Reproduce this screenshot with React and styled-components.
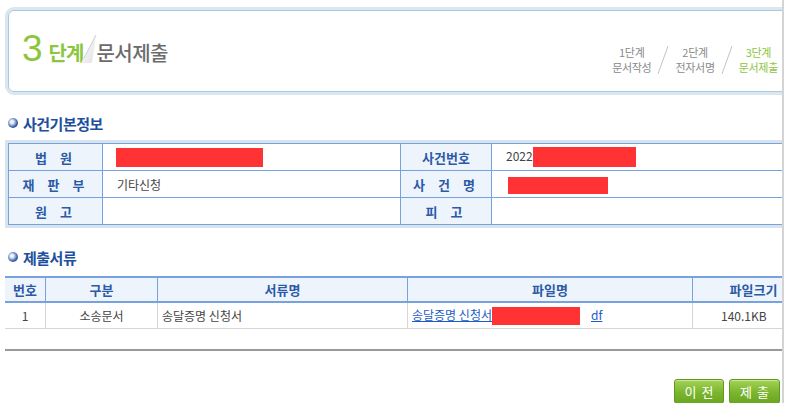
import React from 'react';
import styled, { createGlobalStyle } from 'styled-components';

const GlobalStyle = createGlobalStyle`
	html, body {
		margin: 0;
		padding: 0;
		background: #fff;
	}
	body {
		font-family: 'Noto Sans CJK KR', 'Noto Sans', sans-serif;
		font-size: 12px;
		color: #444;
	}
`;

const Frame = styled.div`
	width: 782px;
	height: 403px;
	overflow: hidden;
	border-right: 2px solid #d4d4d4;
	background: #fff;
`;

const Inner = styled.div`
	width: 820px;
`;

const StepBox = styled.div`
	margin: 10px 0 0 8px;
	width: 790px;
	height: 82px;
	border: 1px solid #a9c9e2;
	border-radius: 6px;
	box-shadow: 0 0 0 3px #dbe7f0;
	display: flex;
	align-items: flex-end;
	padding: 0 0 0 13px;
	box-sizing: border-box;
`;

const StepTitle = styled.div`
	display: flex;
	align-items: baseline;
	padding-bottom: 24px;
	font-family: 'Liberation Sans', 'Noto Sans CJK KR', sans-serif;
`;

const BigNum = styled.span`
	font-size: 37px;
	line-height: 36px;
	color: #8cc63f;
	margin-right: 6px;
`;

const StepWord = styled.span`
	font-family: 'Noto Sans CJK KR', sans-serif;
	font-size: 20px;
	font-weight: 700;
	color: #8cc63f;
	letter-spacing: -1px;
`;

const Slash = styled.svg`
	width: 18px;
	height: 34px;
	margin: 0 -1px 0 -4px;
	align-self: flex-end;
`;

const StepName = styled.span`
	font-family: 'Noto Sans CJK KR', sans-serif;
	font-size: 20px;
	font-weight: 500;
	color: #6b6b6b;
	letter-spacing: -0.5px;
`;

const Steps = styled.div`
	margin-left: auto;
	margin-right: 19px;
	padding-bottom: 16px;
	display: flex;
	align-items: center;
	gap: 5px;
`;

const Step = styled.div`
	text-align: center;
	font-size: 11px;
	line-height: 15px;
	letter-spacing: -0.3px;
	color: ${p => (p.active ? '#8cc63f' : '#8a8a8a')};
`;

const StepSep = styled.svg`
	width: 14px;
	height: 30px;
`;

const SectionTitle = styled.h2`
	margin: ${p => p.mt} 0 0 8px;
	display: flex;
	align-items: center;
	gap: 5px;
	font-size: 15px;
	font-weight: 700;
	color: #1d4f9e;
	height: 18px;
	letter-spacing: -0.5px;
`;

const Bullet = styled.span`
	width: 10px;
	height: 10px;
	border-radius: 50%;
	background: radial-gradient(circle at 40% 40%, #eef3fb 0 1.5px, #9fb6de 3px, #5d7dbd 4.5px, #3d5a9c 5px);
`;

const InfoWrap = styled.div`
	margin: 8px 0 0 5px;
	padding: 3px 0 3px 3px;
	background: #d7e4ee;
`;

const InfoTable = styled.table`
	border-collapse: collapse;
	width: 810px;
	background: #fff;
	table-layout: fixed;
`;

const Label = styled.th`
	width: ${p => p.w}px;
	height: 26px;
	padding: 0;
	background: #eef4fb;
	border: 1px solid #77a1df;
	font-size: 13px;
	font-weight: 700;
	color: #2b5aa8;
	letter-spacing: ${p => p.ls || '0'};
	word-spacing: 2px;
`;

const Value = styled.td`
	width: ${p => (p.w ? `${p.w}px` : 'auto')};
	height: 26px;
	padding: 0 0 0 14px;
	border: 1px solid #77a1df;
	font-size: 12px;
	color: #444;
	white-space: nowrap;
`;

const Redact = styled.span`
	display: inline-block;
	vertical-align: middle;
	width: ${p => p.w}px;
	height: ${p => p.h}px;
	background: #ff3333;
	margin-left: ${p => p.ml || 0}px;
`;

const DocTable = styled.table`
	margin: 10px 0 0 5px;
	border-collapse: collapse;
	width: 810px;
	table-layout: fixed;
`;

const Head = styled.th`
	width: ${p => (p.w ? `${p.w}px` : 'auto')};
	height: 23px;
	padding: 0;
	background: #eef4fb;
	border: 1px solid #77a1df;
	border-width: 2px 1px 2px 1px;
	font-size: 13px;
	font-weight: 700;
	color: #2b5aa8;
	&:first-child {
		border-left: none;
	}
`;

const Cell = styled.td`
	height: 25px;
	padding: ${p => (p.align === 'left' ? '0 0 0 4px' : '0')};
	text-align: ${p => p.align || 'center'};
	border: 1px solid #d6d6d6;
	border-top: none;
	font-size: 12px;
	color: #444;
	white-space: nowrap;
	&:first-child {
		border-left: none;
	}
`;

const SizeCell = styled(Cell)`
	text-align: left;
	padding-left: 28px;
`;

const FileLink = styled.a`
	color: #1c5cc6;
	text-decoration: underline;
	cursor: pointer;
	margin-left: ${p => p.ml || 0}px;
`;

const BottomRule = styled.div`
	margin: 20px 0 0 5px;
	width: 810px;
	height: 2px;
	background: #9a9a9a;
`;

const Buttons = styled.div`
	width: 780px;
	margin-top: 28px;
	display: flex;
	justify-content: flex-end;
	gap: 5px;
`;

const Button = styled.button`
	width: ${p => p.w}px;
	height: 25px;
	padding: 0;
	border: 1px solid #5f9a1e;
	border-radius: 3px;
	background: linear-gradient(#a5d258, #7ab52e 55%, #6ba622);
	box-shadow: inset 0 1px 0 #c8e88f;
	color: #fff;
	font-family: 'Noto Sans CJK KR', sans-serif;
	font-size: 13px;
	letter-spacing: 5px;
	text-indent: 5px;
	cursor: pointer;
`;

const info = [
	[
		{ label: '법 원', ls: '4px', value: <Redact w={147} h={19} ml={-1} /> },
		{ label: '사건번호', value: <>2022<Redact w={103} h={20} /></> },
	],
	[
		{ label: '재 판 부', ls: '4px', value: '기타신청' },
		{ label: '사 건 명', ls: '4px', value: <Redact w={100} h={17} ml={2} /> },
	],
	[
		{ label: '원 고', ls: '4px', value: '' },
		{ label: '피 고', ls: '4px', value: '' },
	],
];

const docs = [
	{ no: 1, kind: '소송문서', name: '송달증명 신청서', file: '송달증명 신청서', size: '140.1KB' },
];

export default function App() {
	return (
		<Frame>
			<GlobalStyle />
			<Inner>
				<StepBox>
					<StepTitle>
						<BigNum>3</BigNum>
						<StepWord>단계</StepWord>
						<Slash viewBox="0 0 18 34">
							<defs>
								<linearGradient id="sl" x1="0" y1="0" x2="1" y2="1">
									<stop offset="0" stopColor="#ffffff" />
									<stop offset="1" stopColor="#e2e2e2" />
								</linearGradient>
							</defs>
							<polygon points="17,2 2,30 13,30" fill="url(#sl)" />
							<line x1="17" y1="2" x2="5" y2="25" stroke="#d0d0d0" strokeWidth="1" />
						</Slash>
						<StepName>문서제출</StepName>
					</StepTitle>
					<Steps>
						<Step>1단계<br />문서작성</Step>
						<StepSep viewBox="0 0 14 30"><line x1="12" y1="1" x2="2" y2="29" stroke="#c4c4c4" /></StepSep>
						<Step>2단계<br />전자서명</Step>
						<StepSep viewBox="0 0 14 30"><line x1="12" y1="1" x2="2" y2="29" stroke="#c4c4c4" /></StepSep>
						<Step active>3단계<br />문서제출</Step>
					</Steps>
				</StepBox>

				<SectionTitle mt="22px"><Bullet />사건기본정보</SectionTitle>
				<InfoWrap>
					<InfoTable>
						<tbody>
							{info.map((row, i) => (
								<tr key={i}>
									<Label w={93} ls={row[0].ls}>{row[0].label}</Label>
									<Value w={283}>{row[0].value}</Value>
									<Label w={90} ls={row[1].ls}>{row[1].label}</Label>
									<Value>{row[1].value}</Value>
								</tr>
							))}
						</tbody>
					</InfoTable>
				</InfoWrap>

				<SectionTitle mt="20px"><Bullet />제출서류</SectionTitle>
				<DocTable>
					<thead>
						<tr>
							<Head w={40}>번호</Head>
							<Head w={111}>구분</Head>
							<Head w={249}>서류명</Head>
							<Head w={284}>파일명</Head>
							<Head>파일크기</Head>
						</tr>
					</thead>
					<tbody>
						{docs.map(d => (
							<tr key={d.no}>
								<Cell>{d.no}</Cell>
								<Cell>{d.kind}</Cell>
								<Cell align="left">{d.name}</Cell>
								<Cell align="left">
									<FileLink>{d.file}</FileLink>
									<Redact w={88} h={18} />
									<FileLink ml={11}>df</FileLink>
								</Cell>
								<SizeCell>{d.size}</SizeCell>
							</tr>
						))}
					</tbody>
				</DocTable>
				<BottomRule />

				<Buttons>
					<Button w={50}>이전</Button>
					<Button w={51}>제출</Button>
				</Buttons>
			</Inner>
		</Frame>
	);
}
